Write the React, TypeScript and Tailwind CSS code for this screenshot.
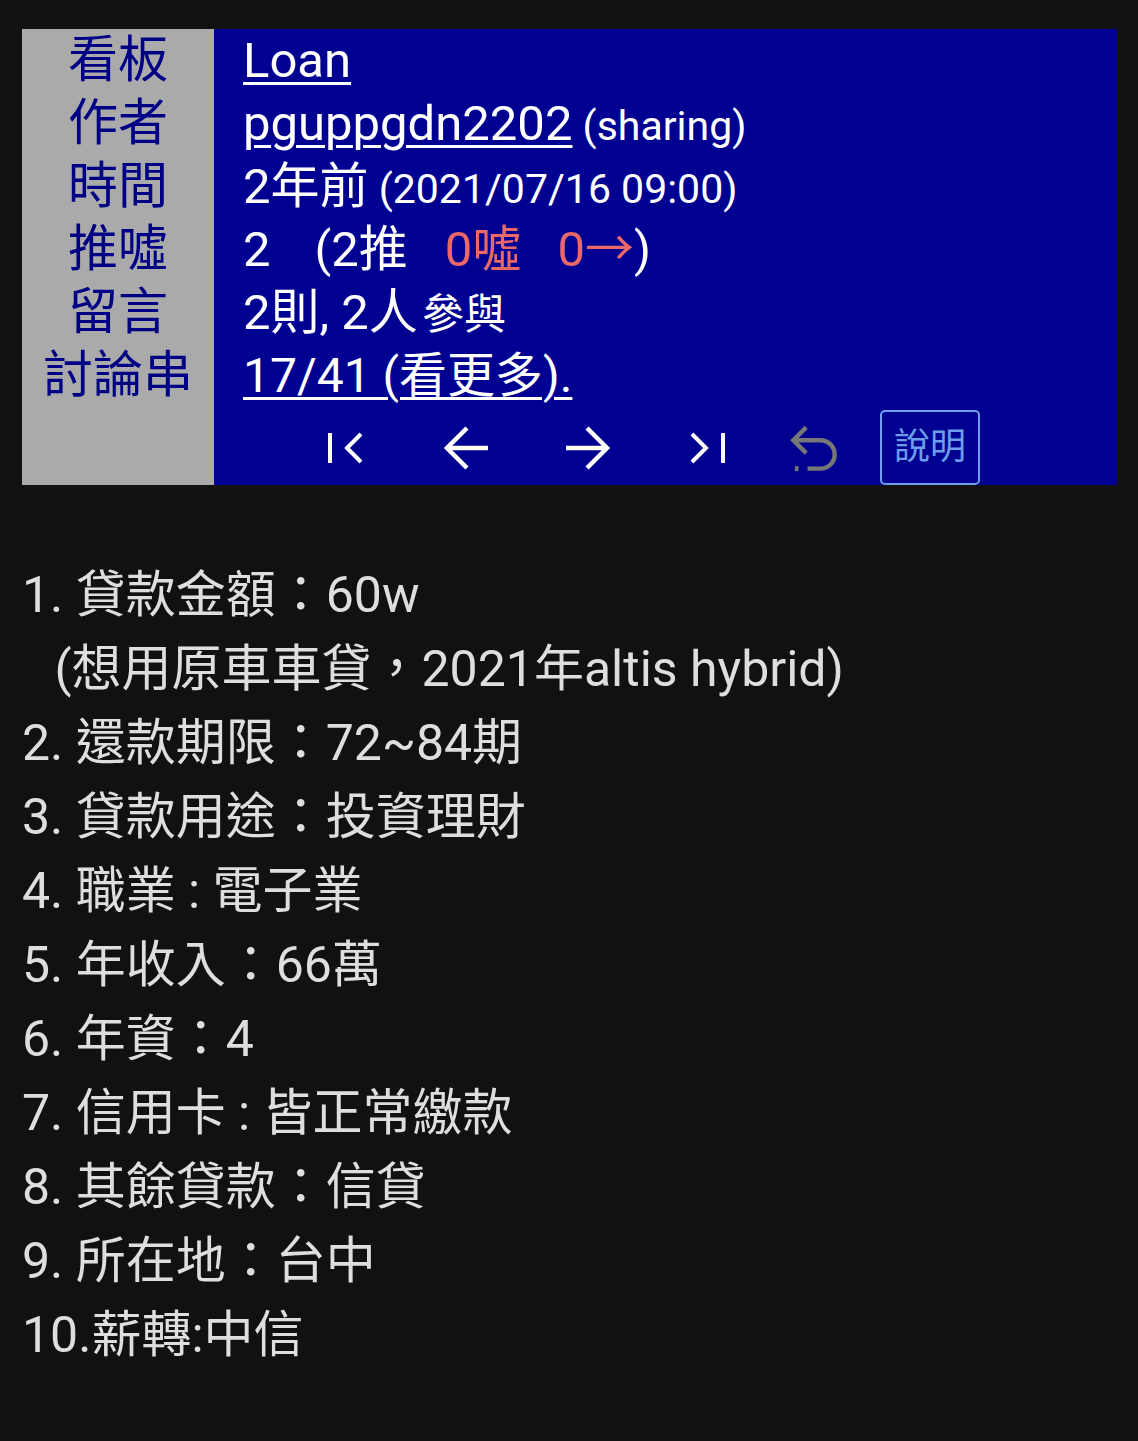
import React from 'react';

const font = { fontFamily: "Roboto, 'Noto Sans CJK TC', sans-serif" };

const labels = ['看板', '作者', '時間', '推噓', '留言', '討論串'];

const lines = [
  '1. 貸款金額：60w',
  ' (想用原車車貸，2021年altis hybrid)',
  '2. 還款期限：72~84期',
  '3. 貸款用途：投資理財',
  '4. 職業 : 電子業',
  '5. 年收入：66萬',
  '6. 年資：4',
  '7. 信用卡 : 皆正常繳款',
  '8. 其餘貸款：信貸',
  '9. 所在地：台中',
  '10.薪轉:中信',
];

function NavIcon({ children, className = '' }: { children: React.ReactNode; className?: string }) {
  return <div className={`flex h-full items-center justify-center ${className}`}>{children}</div>;
}

function Row({ children }: { children: React.ReactNode }) {
  return <div className="h-[63px] overflow-visible whitespace-nowrap">{children}</div>;
}

export default function App() {
  return (
    <div className="min-h-[1441px] bg-[#111111] pt-[29px] pl-[22px] pr-[21px] text-white" style={font}>
      {/* header panel */}
      <div className="flex h-[456px]">
        <div className="flex w-[192px] flex-col items-center bg-[#aaaaaa] text-[50px] leading-[63px] text-[#000085]">
          {labels.map((l) => (
            <div key={l} className="h-[63px]">
              {l}
            </div>
          ))}
        </div>
        <div className="flex flex-1 flex-col bg-[#000091] pl-[29px] text-[49px] leading-[63px]">
          <Row>
            <span className="underline decoration-[3px] underline-offset-[5px]">Loan</span>
          </Row>
          <Row>
            <span className="underline decoration-[3px] underline-offset-[5px]">pguppgdn2202</span>
            <span className="text-[41px]"> (sharing)</span>
          </Row>
          <Row>
            2年前<span className="text-[41px]"> (2021/07/16 09:00)</span>
          </Row>
          <Row>
            2<span className="inline-block w-[44px]" />(2推<span className="inline-block w-[37px]" />
            <span className="text-[#ea6868]">
              0噓<span className="inline-block w-[36px]" />0→
            </span>
            )
          </Row>
          <Row>
            2則, 2人<span className="ml-[4px] text-[42px]">參與</span>
          </Row>
          <Row>
            <span className="text-[48px] underline decoration-[3px] underline-offset-[5px]">17/41 (看更多).</span>
          </Row>
          <div className="mt-[3px] flex h-[75px] items-stretch pl-[44px]">
            <NavIcon className="w-[120px]">
              <svg width="40" height="40" viewBox="0 0 40 40" fill="none" stroke="white" strokeWidth="4">
                <path d="M3 5v30" />
                <path d="M34 6 20 20l14 14" />
              </svg>
            </NavIcon>
            <NavIcon className="w-[120px]">
              <svg width="48" height="48" viewBox="0 0 48 48" fill="none" stroke="white" strokeWidth="4.5">
                <path d="M45 24H4" />
                <path d="M24 4 4 24l20 20" />
              </svg>
            </NavIcon>
            <NavIcon className="w-[120px]">
              <svg width="48" height="48" viewBox="0 0 48 48" fill="none" stroke="white" strokeWidth="4.5">
                <path d="M3 24h41" />
                <path d="M24 4l20 20-20 20" />
              </svg>
            </NavIcon>
            <NavIcon className="w-[120px]">
              <svg width="40" height="40" viewBox="0 0 40 40" fill="none" stroke="white" strokeWidth="4">
                <path d="M5 6l14 14-14 14" />
                <path d="M36 5v30" />
              </svg>
            </NavIcon>
            <NavIcon className="w-[94px]">
              <svg width="62" height="62" viewBox="0 0 24 24" fill="none" stroke="#777777" strokeWidth="1.7">
                <path d="M9 14 4 9l5-5" />
                <path d="M4 9h10.5a5.5 5.5 0 0 1 0 11H9.5" />
                <path d="M4.6 20h1.4" strokeWidth="1.9" />
              </svg>
            </NavIcon>
            <button className="ml-[19px] flex h-[75px] w-[100px] items-center justify-center rounded-[5px] border-2 border-[#6d9eeb] text-[36px] text-[#6d9eeb]">
              說明
            </button>
          </div>
        </div>
      </div>

      {/* post body */}
      <div className="mt-[73px] text-[50px] leading-[74px] text-[#dedede]">
        {lines.map((l, i) => (
          <div key={i} className={`whitespace-pre ${i === 1 ? 'ml-[20px]' : ''}`}>
            {l}
          </div>
        ))}
      </div>
    </div>
  );
}
